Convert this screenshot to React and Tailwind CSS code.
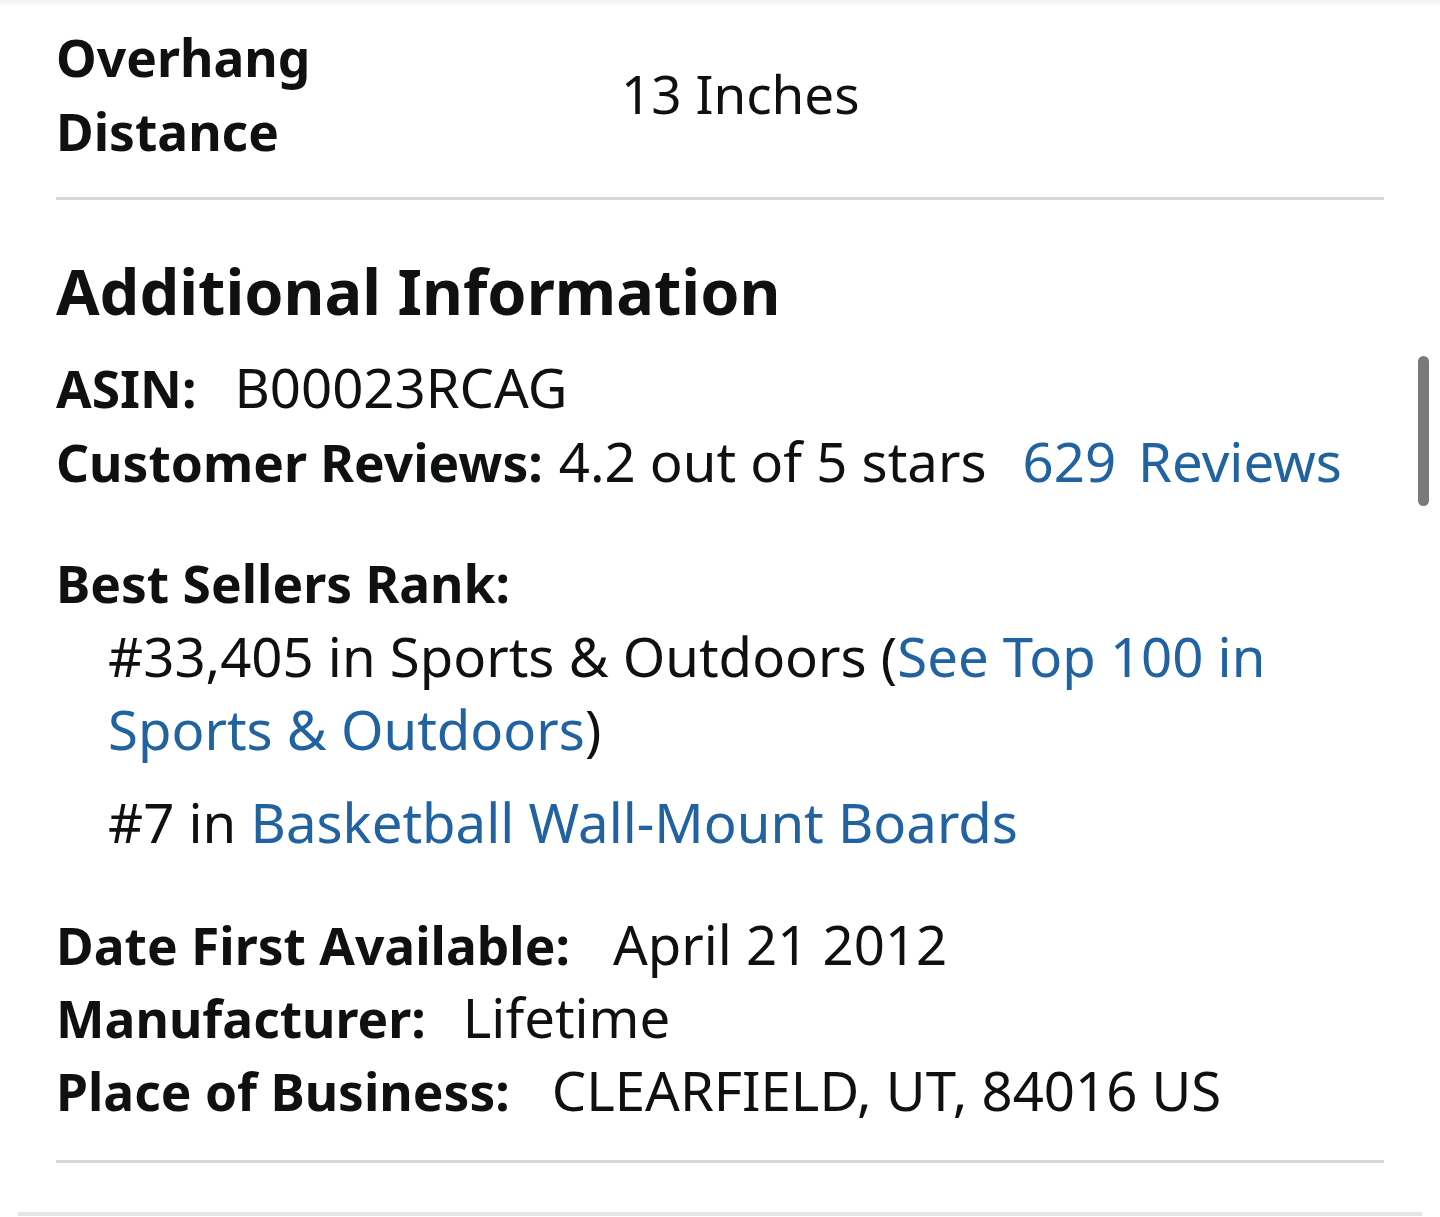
import React from 'react'

const Row = ({ label, children, gap = 'ml-[42px]' }) => (
    <div className="leading-[73px] whitespace-nowrap">
        <span className="font-bold text-[51.5px] leading-none">{label}</span>
        <span className={gap}>{children}</span>
    </div>
)

const App = () => {
    return (
        <div className="relative min-h-[1217px] bg-white text-[#0f1111] text-[54.5px] overflow-hidden" style={{ fontFamily: '"Noto Sans", "Open Sans", sans-serif' }}>
            {/* faint top edge */}
            <div className="h-[6px] bg-gradient-to-b from-[#f0f1f1] to-white" />

            <div className="px-[56px]">
                {/* Spec row */}
                <div className="flex items-center pt-[14px] pb-[29px] border-b-[3px] border-[#d5d9d9]">
                    <div className="w-[565px] font-bold text-[51.5px] leading-[74px]">
                        Overhang<br />Distance
                    </div>
                    <div className="leading-[74px] text-[53px]">13 Inches</div>
                </div>

                {/* Additional Information */}
                <div className="pt-[51px] pb-[33px] border-b-[3px] border-[#d5d9d9]">
                    <h2 className="text-[63px] font-bold leading-[80px] mb-[19px]">Additional Information</h2>

                    <div className="leading-[74px] whitespace-nowrap">
                        <span className="font-bold text-[51.5px] leading-none">ASIN:</span>
                        <span className="ml-[38px]">B00023RCAG</span>
                    </div>
                    <div className="leading-[75px] whitespace-nowrap">
                        <span className="font-bold text-[51.5px] leading-none">Customer Reviews:</span>
                        <span className="ml-[16px]">4.2 out of 5 stars</span>
                        <a className="ml-[36px] text-[#2162a1]">629</a>
                        <a className="ml-[22px] text-[#2162a1]">Reviews</a>
                    </div>

                    <div className="mt-[47px] leading-[74px] font-bold text-[51.5px]">Best Sellers Rank:</div>
                    <div className="pl-[52px]">
                        <div className="leading-[73px] whitespace-nowrap">
                            #33,405 in Sports &amp; Outdoors (<a className="text-[#2162a1]">See Top 100 in<br />Sports &amp; Outdoors</a>)
                        </div>
                        <div className="mt-[19px] leading-[74px]">
                            #7 in <a className="text-[#2162a1]">Basketball Wall-Mount Boards</a>
                        </div>
                    </div>

                    <div className="mt-[49px]">
                        <Row label="Date First Available:" gap="ml-[43px]">April 21 2012</Row>
                        <Row label="Manufacturer:" gap="ml-[37px]">Lifetime</Row>
                        <Row label="Place of Business:">CLEARFIELD, UT, 84016 US</Row>
                    </div>
                </div>
            </div>

            {/* bottom rule */}
            <div className="mx-[18px] mt-[49px] h-[4px] bg-[#e3e6e6]" />

            {/* scrollbar */}
            <div className="absolute left-[1418px] top-[356px] w-[11px] h-[150px] rounded-full bg-[#7a7a7a]" />
        </div>
    )
}

export default App
